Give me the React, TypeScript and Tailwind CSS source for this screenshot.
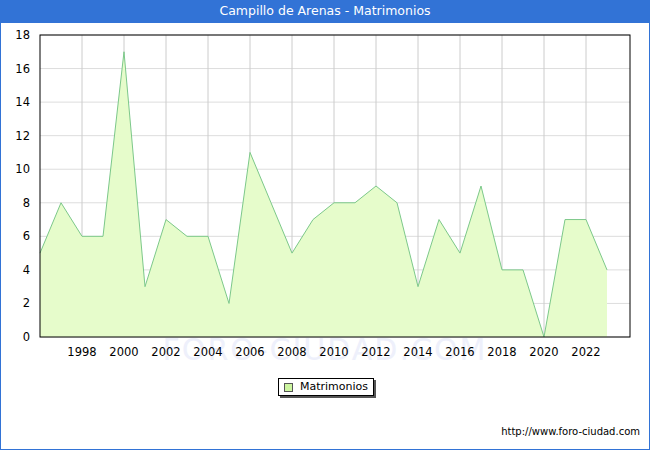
const data = [5, 8, 6, 6, 17, 3, 7, 6, 6, 2, 11, 8, 5, 7, 8, 8, 9, 8, 3, 7, 5, 9, 4, 4, 0, 7, 7, 4];

const X0 = 40;
const X1 = 630;
const Y0 = 35;
const Y1 = 337;
const px = (i: number) => X0 + i * 21;
const py = (v: number) => Y1 - (v * (Y1 - Y0)) / 18;

const App = () => {
  const line = data.map((v, i) => `${px(i)},${py(v)}`).join(' ');
  const area = `${px(0)},${Y1} ${line} ${px(data.length - 1)},${Y1}`;
  const font = { fontFamily: '"DejaVu Sans", sans-serif' };
  return (
    <div
      className="w-[650px] h-[450px] flex flex-col bg-white border border-[#3273d6] border-t-0"
      style={font}
    >
      <div className="h-[23px] bg-[#3273d6] text-white text-[12.5px] flex items-center justify-center shrink-0">
        Campillo de Arenas - Matrimonios
      </div>
      <svg width={648} height={340} viewBox="1 23 648 340" className="shrink-0">
        {Array.from({ length: 10 }, (_, k) => (
          <line key={'h' + k} x1={X0} x2={X1} y1={py(k * 2)} y2={py(k * 2)} stroke="#dddddd" />
        ))}
        {Array.from({ length: 13 }, (_, k) => (
          <line key={'v' + k} x1={px(2 + k * 2)} x2={px(2 + k * 2)} y1={Y0} y2={Y1} stroke="#cccccc" />
        ))}
        <text x={325} y={360} textAnchor="middle" fontSize={30} fill="#eef0fb" letterSpacing={2}>
          FORO-CIUDAD.COM
        </text>
        <polygon points={area} fill="#e6fccb" />
        <polyline points={line} fill="none" stroke="#7cc88a" strokeWidth={1} />
        <rect x={X0} y={Y0} width={X1 - X0} height={Y1 - Y0} fill="none" stroke="#000" />
        {Array.from({ length: 10 }, (_, k) => (
          <text key={'yl' + k} x={30} y={py(k * 2) + 4} textAnchor="end" fontSize={11.5} fill="#000">
            {k * 2}
          </text>
        ))}
        {Array.from({ length: 13 }, (_, k) => (
          <text key={'xl' + k} x={px(2 + k * 2)} y={356} textAnchor="middle" fontSize={11.5} fill="#000">
            {1998 + k * 2}
          </text>
        ))}
      </svg>
      <div className="flex justify-center mt-[15px] pl-[2px]">
        <div className="flex items-center gap-[7px] h-[18px] px-[5px] border border-black bg-white text-[11px] shadow-[2px_2px_0_#555]">
          <span className="w-[9px] h-[9px] border border-[#555] bg-[#ccf5a0]" />
          <span>Matrimonios</span>
        </div>
      </div>
      <div className="flex-1" />
      <div className="text-right text-[10px] pr-[9px] pb-[10px]">http://www.foro-ciudad.com</div>
    </div>
  );
};

export default App;
